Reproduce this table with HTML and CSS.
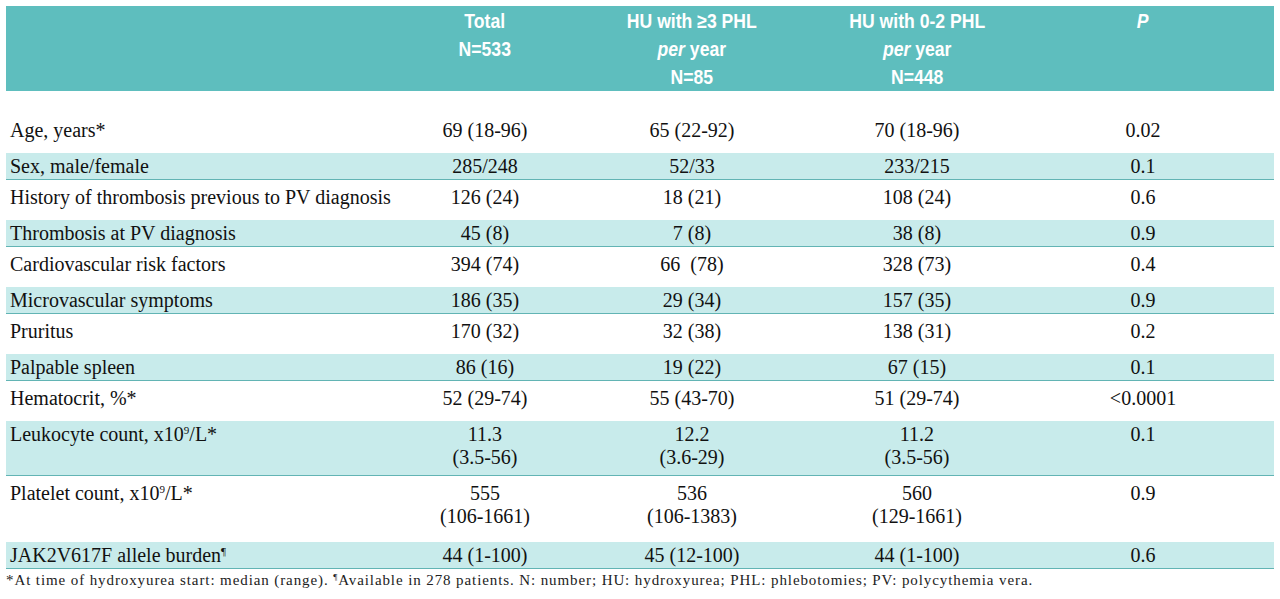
FILE: index.html
```html
<!DOCTYPE html>
<html lang="en">
<head>
<meta charset="utf-8">
<title>Table</title>
<link rel="stylesheet" href="styles.css">
</head>
<body>
<div class="page">
  <div class="head grid">
    <div class="hc"></div>
    <div class="hc"><span class="ht">Total<br>N=533</span></div>
    <div class="hc"><span class="ht">HU with ≥3 PHL<br><i>per</i> year<br>N=85</span></div>
    <div class="hc"><span class="ht">HU with 0-2 PHL<br><i>per</i> year<br>N=448</span></div>
    <div class="hc pcol"><span class="ht"><i>P</i></span></div>
  </div>
  <div class="body">
    <div class="row grid">
      <div class="lbl">Age, years*</div><div class="c">69 (18-96)</div><div class="c">65 (22-92)</div><div class="c">70 (18-96)</div><div class="c pcol">0.02</div>
    </div>
    <div class="row alt grid">
      <div class="lbl">Sex, male/female</div><div class="c">285/248</div><div class="c">52/33</div><div class="c">233/215</div><div class="c pcol">0.1</div>
    </div>
    <div class="row grid">
      <div class="lbl">History of thrombosis previous to PV diagnosis</div><div class="c">126 (24)</div><div class="c">18 (21)</div><div class="c">108 (24)</div><div class="c pcol">0.6</div>
    </div>
    <div class="row alt grid">
      <div class="lbl">Thrombosis at PV diagnosis</div><div class="c">45 (8)</div><div class="c">7 (8)</div><div class="c">38 (8)</div><div class="c pcol">0.9</div>
    </div>
    <div class="row grid">
      <div class="lbl">Cardiovascular risk factors</div><div class="c">394 (74)</div><div class="c">66&nbsp; (78)</div><div class="c">328 (73)</div><div class="c pcol">0.4</div>
    </div>
    <div class="row alt grid">
      <div class="lbl">Microvascular symptoms</div><div class="c">186 (35)</div><div class="c">29 (34)</div><div class="c">157 (35)</div><div class="c pcol">0.9</div>
    </div>
    <div class="row grid">
      <div class="lbl">Pruritus</div><div class="c">170 (32)</div><div class="c">32 (38)</div><div class="c">138 (31)</div><div class="c pcol">0.2</div>
    </div>
    <div class="row alt grid">
      <div class="lbl">Palpable spleen</div><div class="c">86 (16)</div><div class="c">19 (22)</div><div class="c">67 (15)</div><div class="c pcol">0.1</div>
    </div>
    <div class="row grid">
      <div class="lbl">Hematocrit, %*</div><div class="c">52 (29-74)</div><div class="c">55 (43-70)</div><div class="c">51 (29-74)</div><div class="c pcol">&lt;0.0001</div>
    </div>
    <div class="row alt two grid">
      <div class="lbl">Leukocyte count, x10<sup>9</sup>/L*</div><div class="c">11.3<br>(3.5-56)</div><div class="c">12.2<br>(3.6-29)</div><div class="c">11.2<br>(3.5-56)</div><div class="c pcol">0.1</div>
    </div>
    <div class="row two grid">
      <div class="lbl">Platelet count, x10<sup>9</sup>/L*</div><div class="c">555<br>(106-1661)</div><div class="c">536<br>(106-1383)</div><div class="c">560<br>(129-1661)</div><div class="c pcol">0.9</div>
    </div>
    <div class="row alt grid">
      <div class="lbl">JAK2V617F allele burden<sup>¶</sup></div><div class="c">44 (1-100)</div><div class="c">45 (12-100)</div><div class="c">44 (1-100)</div><div class="c pcol">0.6</div>
    </div>
  </div>
  <p class="note">*At time of hydroxyurea start: median (range). <sup>¶</sup>Available in 278 patients. N: number; HU: hydroxyurea; PHL: phlebotomies; PV: polycythemia vera.</p>
</div>
</body>
</html>
```

FILE: styles.css
```css
html, body {
  margin: 0;
  padding: 0;
  background: #ffffff;
}

.page {
  padding: 6px 6px 0 6px;
  width: 1268px;
  font-family: "Liberation Serif", "Times New Roman", serif;
  color: #111111;
}

.grid {
  display: grid;
  grid-template-columns: 376px 206px 208px 242px 236px;
}

.head {
  background: #5ebebe;
  color: #ffffff;
  font-family: "Liberation Sans", Arial, sans-serif;
  font-weight: 700;
  font-size: 20px;
  line-height: 28px;
  height: 85px;
  box-sizing: border-box;
  padding-top: 1px;
}

.hc {
  text-align: center;
}

.ht {
  display: inline-block;
  transform: scaleX(0.88);
  transform-origin: center top;
}

.hc i {
  font-style: italic;
}

.pcol {
  padding-right: 26px;
}

.body {
  padding-top: 22px;
  font-size: 20px;
}

.row {
  height: 34px;
  line-height: 34px;
}

.row.alt {
  margin-top: 6px;
  height: 26px;
  line-height: 26px;
  background: #c8ebeb;
  border-bottom: 1px solid #62b4b4;
}

.row.two {
  height: auto;
  line-height: 23px;
  padding: 6px 0 8px 0;
}

.row.alt.two {
  padding: 2px 0 6px 0;
}

.lbl {
  padding-left: 4px;
  white-space: nowrap;
}

.c {
  text-align: center;
  white-space: nowrap;
}

sup {
  font-size: 11px;
  line-height: 0;
  vertical-align: 7px;
}

.note {
  margin: 0;
  padding-top: 1px;
  font-size: 15px;
  line-height: 20px;
  letter-spacing: 0.9px;
  color: #222222;
  white-space: nowrap;
}

.note sup {
  font-size: 9px;
  vertical-align: 5px;
}
```
